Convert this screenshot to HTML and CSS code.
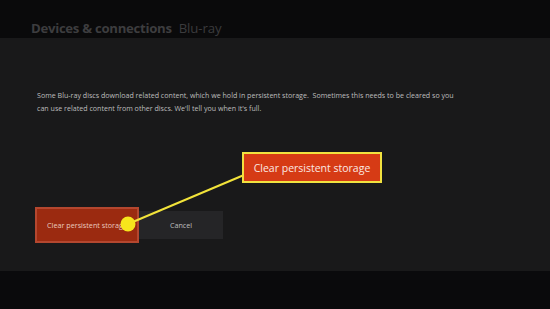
FILE: index.html
```html
<!DOCTYPE html>
<html>
<head>
<meta charset="utf-8">
<link rel="stylesheet" href="styles.css">
</head>
<body>
<div class="screen">
  <header class="top">
    <h1 class="title"><span class="section">Devices &amp; connections</span><span class="page">Blu-ray</span></h1>
  </header>
  <main class="panel">
    <p class="desc">Some Blu-ray discs download related content, which we hold in persistent storage.&nbsp; Sometimes this needs to be cleared so you can use related content from other discs. We'll tell you when it's full.</p>
    <div class="actions">
      <button class="btn btn-primary">Clear persistent storage</button>
      <button class="btn btn-secondary">Cancel</button>
    </div>
  </main>
  <footer class="bottom"></footer>
  <svg class="pointer" width="550" height="309" viewBox="0 0 550 309">
    <line x1="128" y1="224" x2="244" y2="175" stroke="#f2e33a" stroke-width="2"/>
    <circle cx="128" cy="224" r="7.5" fill="#f7e51c"/>
  </svg>
  <div class="callout">Clear persistent storage</div>
</div>
</body>
</html>
```
FILE: styles.css
```css
* { box-sizing: border-box; }
html, body { margin: 0; padding: 0; }
body {
  width: 550px;
  height: 309px;
  overflow: hidden;
  background: #0a0a0c;
  font-family: "Open Sans", "Noto Sans", sans-serif;
}
.screen {
  position: relative;
  width: 550px;
  height: 309px;
  display: flex;
  flex-direction: column;
}
.top {
  height: 38px;
  background: #0a0a0b;
  padding: 19px 0 0 31px;
}
.title {
  margin: 0;
  font-size: 13.2px;
  line-height: 18px;
  font-weight: 700;
  letter-spacing: -0.3px;
  color: #3d3d3f;
  white-space: nowrap;
}
.title .page {
  font-weight: 400;
  margin-left: 7px;
  letter-spacing: -0.1px;
  color: #3b3b3d;
}
.panel {
  height: 233px;
  background: #19191a;
  padding: 51px 0 0 37px;
  display: flex;
  flex-direction: column;
}
.desc {
  margin: 0;
  width: 420px;
  font-size: 7.1px;
  line-height: 13px;
  color: #bdbdbd;
}
.actions {
  display: flex;
  align-items: center;
  margin-top: 92px;
  margin-left: -2px;
}
.btn {
  font-family: inherit;
  font-size: 7.2px;
  border: none;
  padding: 0;
  cursor: pointer;
}
.btn-primary {
  width: 104px;
  height: 36px;
  background: #9b2a10;
  border: 2px solid #b4472f;
  color: #e9c9bf;
}
.btn-secondary {
  width: 84px;
  height: 28px;
  background: #252527;
  color: #bdbdbd;
}
.bottom {
  flex: 1;
  background: #0a0a0c;
}
.pointer {
  position: absolute;
  left: 0;
  top: 0;
}
.callout {
  position: absolute;
  left: 242px;
  top: 152px;
  width: 140px;
  height: 31px;
  background: #d63b15;
  border: 2px solid #f1e13f;
  color: #fbe9e3;
  font-size: 10.5px;
  display: flex;
  align-items: center;
  justify-content: center;
}
```
